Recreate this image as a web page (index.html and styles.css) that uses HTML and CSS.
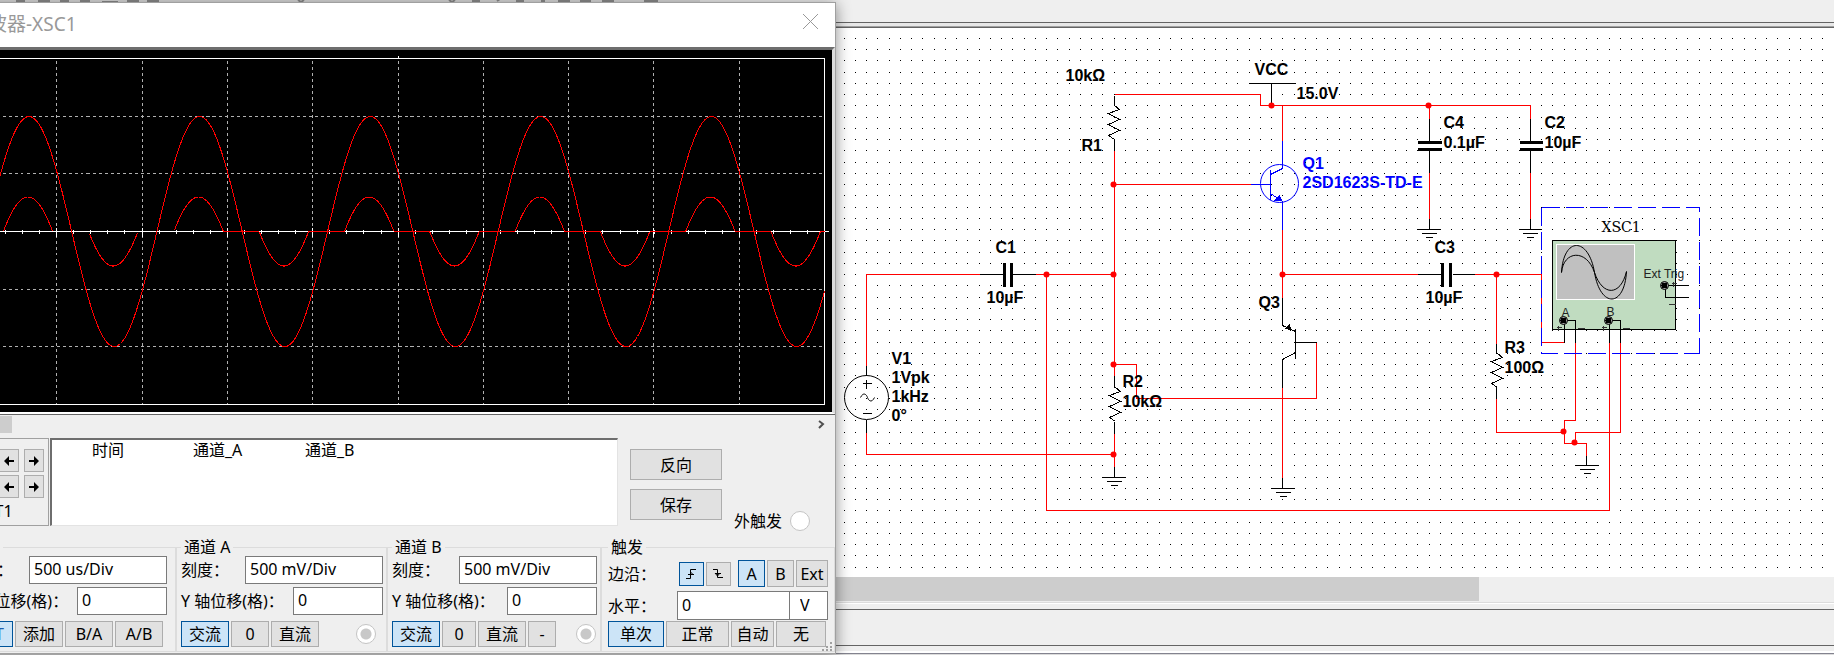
FILE: index.html
```html
<!DOCTYPE html>
<html lang="zh-CN">
	<head>
		<meta charset="UTF-8">
		<title>示波器-XSC1</title>
		<link rel="stylesheet" href="styles.css">
	</head>
	<body>
		<div class="toolbar">
			<svg class="tools" width="700" height="3">
				<path d="M16 1h9M38 1h12M60 1h9M80 1h10M102 2h16M127 1h12M147 1h12M298 0l3 2l3-2M449 0l3 2l3-2M472 1h8M497 1l3-2M516 1h8M541 1h4M558 1h12M580 1h11M602 1h12M644 1h14" />
			</svg>
		</div>
		<div class="canvas">
			<svg class="circuit" width="100%" height="549">
				<defs>
					<pattern id="dots" x="844" y="-1" width="45" height="45" patternUnits="userSpaceOnUse">
						<path class="dot" d="M0 0h1v1h-1zM11 0h1v1h-1zM22 0h1v1h-1zM33 0h1v1h-1zM0 11h1v1h-1zM11 11h1v1h-1zM22 11h1v1h-1zM33 11h1v1h-1zM0 22h1v1h-1zM11 22h1v1h-1zM22 22h1v1h-1zM33 22h1v1h-1zM0 33h1v1h-1zM11 33h1v1h-1zM22 33h1v1h-1zM33 33h1v1h-1z" />
					</pattern>
					<path id="zigzag" d="M0 0L5 4L-6 8L5 14L-6 19L5 25L-6 30L0 34" />
					<path id="ground" d="M-12 0h23M-8 4h15M-4 8h7" />
					<g id="terminal">
						<circle class="ring" r="4" />
						<circle r="3" />
					</g>
				</defs>
				<rect width="100%" height="549" fill="url(#dots)" />
				<g transform="translate(0.5 -27.5)">
					<!-- scope block -->
					<rect class="green" x="1552" y="240" width="123" height="89" />
					<rect class="screen" x="1556" y="244" width="78" height="55" />
					<path class="line smooth" d="M1561 272C1563 236 1588 236 1594 272S1624 307 1626 271M1561 272C1563 250 1586 248 1594 272S1620 296 1626 271" />

					<!-- wires -->
					<path class="wire" d="M866 365V274H979M1035 274H1114M1046 274V510H1609V342M866 432V454H1114M1114 94H1260V105H1530V118M1114 150V375M1114 184H1250M1282 105V140M1282 229V297M1429 105V118M1429 172V218M1530 172V218M1114 364H1136V398H1316V342M1114 433V466M1282 387V477M1282 274H1417M1474 274H1541V342H1564M1496 274V343M1496 398V432H1564M1575 342V420H1564V443H1586V455M1620 342V432H1575V443" />
					<!-- pins -->
					<path class="line" d="M979 274h24M1012 274h23M866 365V375M866 419V432M1114 95V105M1114 139V150M1249 83H1295M1271 83V105M1429 118V141M1429 150V172M1429 218V229M1530 118V141M1530 150V172M1530 218V229M1114 375V387M1114 421V433M1114 466V477M1417 274h24M1452 274h22M1496 343V353M1496 387V398M1282 477V488M1586 455V465M1282 297V325L1295 331M1295 328V358M1295 342H1316M1295 352L1282 359V387" />
					<path class="line" d="M1564 320V342M1564 320H1575V342M1609 320V342M1609 320H1620V342M1664 285H1688M1665 285V297H1688" />
					<path class="plate" d="M1004 262V286M1011 262V286M1442 262V286M1450 262V286M1417 142H1441M1417 149H1441M1519 142H1542M1519 149H1542" />
					<use class="line" href="#zigzag" x="1114" y="105" />
					<use class="line" href="#zigzag" x="1115" y="387" />
					<use class="line" href="#zigzag" x="1497" y="353" />
					<use class="line" href="#ground" x="1114" y="477" />
					<use class="line" href="#ground" x="1283" y="488" />
					<use class="line" href="#ground" x="1429" y="229" />
					<use class="line" href="#ground" x="1530" y="229" />
					<use class="line" href="#ground" x="1587" y="465" />

					<!-- V1 -->
					<circle class="line smooth" cx="866" cy="397" r="22" />
					<path class="line" d="M862 383h9M866 379v9M862 413h9" />
					<path class="line smooth" d="M860 397C863 391 866 394 867 397S871 403 874 397" />

					<!-- Q1, Q3 -->
					<circle class="blue smooth" cx="1279" cy="183" r="19" />
					<path class="blue" d="M1250 184H1270M1270 169V199M1282 140V168L1270 174M1270 193L1282 201V229" />
					<path class="blue-fill" d="M1279 194L1282 201L1274 200Z" />
					<path d="M1285 328L1289 323L1291 331Z" />

					<g class="joint">
						<circle cx="1046" cy="274" r="3" />
						<circle cx="1113" cy="274" r="3" />
						<circle cx="1113" cy="184" r="3" />
						<circle cx="1113" cy="364" r="3" />
						<circle cx="1113" cy="454" r="3" />
						<circle cx="1271" cy="105" r="3" />
						<circle cx="1282" cy="274" r="3" />
						<circle cx="1428" cy="105" r="3" />
						<circle cx="1496" cy="274" r="3" />
						<circle cx="1563" cy="431" r="3" />
						<circle cx="1574" cy="442" r="3" />
					</g>

					<path class="frame" d="M1541 207H1699V353M1541 207V353H1699" />
					<use href="#terminal" x="1563" y="320" />
					<use href="#terminal" x="1608" y="320" />
					<use href="#terminal" x="1664" y="285" />
					<path class="sign" d="M1556 327h5M1558 325v5M1601 327h5M1603 325v5M1671 283h5M1673 281v5M1577 328h7M1622 328h7M1668 304h7" />

					<g class="labels">
						<text x="1065" y="80">10kΩ</text>
						<text x="1081" y="150">R1</text>
						<text x="1254" y="74">VCC</text>
						<text x="1296" y="98">15.0V</text>
						<text x="1443" y="127">C4</text>
						<text x="1443" y="147">0.1µF</text>
						<text x="1544" y="127">C2</text>
						<text x="1544" y="147">10µF</text>
						<text x="995" y="252">C1</text>
						<text x="986" y="302">10µF</text>
						<text x="1434" y="252">C3</text>
						<text x="1425" y="302">10µF</text>
						<text x="1258" y="307">Q3</text>
						<text x="891" y="363">V1</text>
						<text x="891" y="382">1Vpk</text>
						<text x="891" y="401">1kHz</text>
						<text x="891" y="420">0°</text>
						<text x="1122" y="386">R2</text>
						<text x="1122" y="406">10kΩ</text>
						<text x="1504" y="352">R3</text>
						<text x="1504" y="372">100Ω</text>
						<text class="blue-fill" x="1302" y="168">Q1</text>
						<text class="blue-fill" x="1302" y="187">2SD1623S-TD-E</text>
					</g>
					<text class="scope-name" x="1601" y="231">XSC1</text>
					<g class="small">
						<text x="1643" y="277">Ext Trig</text>
						<text x="1561" y="316">A</text>
						<text x="1606" y="315">B</text>
					</g>
				</g>
			</svg>
		</div>
		<div class="hscroll"><div class="thumb"></div></div>
		<div class="status"></div>

		<div class="window">
			<div class="title">
				<span>示波器-XSC1</span>
				<button class="close" aria-label="关闭">
					<svg width="17" height="17"><path d="M1 1L16 16M16 1L1 16" /></svg>
				</button>
			</div>
			<div class="plot">
				<svg class="wave" viewBox="-40 50 872 362">
					<g transform="translate(0.5 0.5)">
						<path class="grid" id="grid" />
						<path class="axis" id="axis" />
						<path class="trace" id="traceA" />
						<path class="trace" id="traceB" />
					</g>
				</svg>
			</div>
			<div class="time-scroll">
				<div class="time-thumb"></div>
				<svg width="8" height="9"><path d="M1 1L5 4L1 8" /></svg>
			</div>
			<div class="readout">
				<div class="cursors">
					<div class="arrows">
						<button aria-label="T1 左"><svg width="10" height="10"><path d="M0 5L5 0V4H10V6H5V10Z" /></svg></button>
						<button aria-label="T1 右"><svg width="10" height="10"><path d="M10 5L5 0V4H0V6H5V10Z" /></svg></button>
						<button aria-label="T2 左"><svg width="10" height="10"><path d="M0 5L5 0V4H10V6H5V10Z" /></svg></button>
						<button aria-label="T2 右"><svg width="10" height="10"><path d="M10 5L5 0V4H0V6H5V10Z" /></svg></button>
					</div>
					<div class="delta">T2-T1</div>
				</div>
				<div class="values">
					<table>
						<tr><th class="c1">时间</th><th class="c2">通道_A</th><th>通道_B</th></tr>
					</table>
				</div>
				<div class="actions">
					<button>反向</button>
					<button>保存</button>
				</div>
				<label class="ext">外触发 <input type="radio" name="ext"></label>
			</div>
			<div class="groups">
				<fieldset class="timebase">
					<legend></legend>
					<div class="row"><label for="ts">标度：</label><input id="ts" class="wide" value="500 us/Div"></div>
					<div class="row"><label for="tx">X 轴位移(格)：</label><input id="tx" value="0"></div>
					<div class="keys">
						<button class="on w40">Y/T</button>
						<button class="w47">添加</button>
						<button class="w47">B/A</button>
						<button class="w47">A/B</button>
					</div>
				</fieldset>
				<fieldset>
					<legend>通道 A</legend>
					<div class="row"><label for="as">刻度：</label><input id="as" class="wide" value="500 mV/Div"></div>
					<div class="row"><label for="ay">Y 轴位移(格)：</label><input id="ay" value="0"></div>
					<div class="keys">
						<button class="on w47">交流</button>
						<button class="w38">0</button>
						<button class="w47">直流</button>
						<input type="radio" name="a" aria-label="通道 A" checked disabled>
					</div>
				</fieldset>
				<fieldset class="channel-b">
					<legend>通道 B</legend>
					<div class="row"><label for="bs">刻度：</label><input id="bs" class="wide" value="500 mV/Div"></div>
					<div class="row"><label for="by">Y 轴位移(格)：</label><input id="by" value="0"></div>
					<div class="keys">
						<button class="on w47">交流</button>
						<button class="w34">0</button>
						<button class="w47">直流</button>
						<button class="w28">-</button>
						<input type="radio" name="b" aria-label="通道 B" checked disabled>
					</div>
				</fieldset>
				<fieldset class="trigger">
					<legend>触发</legend>
					<div class="row edge">
						<span>边沿：</span>
						<button class="on push" aria-label="上升沿"><svg width="11" height="12"><path d="M0 10.500H4.500V1.500H10M2 6.500H8M4.500 4L7 6.500" /></svg></button>
						<button aria-label="下降沿"><svg width="11" height="12"><path d="M0 1.500H4.500V9.500H10M2 5.500H8M2 5L4.500 8L7 5" /></svg></button>
						<button class="on tall">A</button>
						<button class="tall">B</button>
						<button class="tall w32">Ext</button>
					</div>
					<div class="row level">
						<label for="lv">水平：</label>
						<input id="lv" class="push" value="0">
						<input class="unit" aria-label="单位" value="V">
					</div>
					<div class="keys">
						<button class="on w56">单次</button>
						<button class="w63">正常</button>
						<button class="w43">自动</button>
						<button class="w50">无</button>
					</div>
					<svg class="grip" width="12" height="9"><path d="M8 0h2v2h-2zM4 4h2v2h-2zM8 4h2v2h-2zM0 7h2v2h-2zM4 7h2v2h-2zM8 7h2v2h-2z" /></svg>
				</fieldset>
			</div>
		</div>
		<script src="script.js"></script>
	</body>
</html>
```

FILE: styles.css
```css
* {
	box-sizing: border-box;
}
body {
	margin: 0;
	height: 100vh;
	display: flex;
	flex-direction: column;
	overflow: hidden;
	background: #efefef;
	color: #000;
	font-family: "Noto Sans", "Noto Sans CJK SC", sans-serif;
	font-size: 16px;
	line-height: 20px;
}
.toolbar {
	height: 28px;
	flex: none;
	border-bottom: 1px solid #646464;
	background: linear-gradient(#efefef 22px, #646464 22px, #646464 23px, #e8e8e8 23px, #e8e8e8 26px, #a0a0a0 26px);
}
.tools {
	display: block;
	background: #dcdcdc;
}
.tools path {
	stroke: #8c8c8c;
	stroke-width: 2px;
	fill: none;
}
.canvas {
	flex: 1;
	min-height: 0;
	overflow: hidden;
	background: #fff;
}
.hscroll {
	height: 24px;
	flex: none;
}
.thumb {
	width: calc(100% - 355px);
	height: 24px;
	background: #cdcdcd;
}
.status {
	height: 54px;
	flex: none;
	background: linear-gradient(#efefef 1px, #dcdcdc 1px, #dcdcdc 2px, #fff 2px, #fff 3px, #efefef 3px, #efefef 8px, #646464 8px, #646464 9px, #efefef 9px, #efefef 44px, #646464 44px, #646464 45px, #efefef 45px, #efefef 50px, #fff 50px, #fff 52px, #83838f 52px, #83838f 53px, #dcdcdc 53px);
}

/* schematic */
.circuit {
	display: block;
	shape-rendering: crispEdges;
}
.smooth {
	shape-rendering: auto;
}
.wire {
	fill: none;
	stroke: #f00;
}
.line {
	fill: none;
	stroke: #000;
}
.plate {
	stroke: #000;
	stroke-width: 3px;
}
.blue {
	fill: none;
	stroke: #00f;
}
.blue-fill {
	fill: #00f;
}
.joint {
	fill: #f00;
	shape-rendering: auto;
}
.frame {
	fill: none;
	stroke: #00f;
	stroke-dasharray: 18 6;
}
.green {
	fill: #c0dcc0;
	stroke: #000;
}
.screen {
	fill: #c0c0c0;
	stroke: #fff;
}
.ring {
	fill: #a0a0a0;
	stroke: #000;
	shape-rendering: auto;
}
.sign {
	stroke: #333;
}
.labels {
	font-family: "Liberation Sans", sans-serif;
	font-size: 16px;
	font-weight: bold;
}
.scope-name {
	font-family: "DejaVu Serif", serif;
	font-size: 14px;
}
.small {
	font-family: "Liberation Sans", sans-serif;
	font-size: 12px;
	fill: #222;
}

/* oscilloscope window, runs off the left edge */
.window {
	position: absolute;
	top: 2px;
	left: -40px;
	width: 876px;
	background: #efefef;
	border: 1px solid #a0a0a0;
	border-left: 0;
	box-shadow: 0 2px 14px rgba(0, 0, 0, .45);
}
.title {
	height: 44px;
	display: flex;
	align-items: center;
	justify-content: space-between;
	padding: 0 16px 2px 9px;
	background: #fff;
	color: #999;
	font-size: 19px;
}
.close {
	border: 0;
	padding: 0;
	background: none;
	display: flex;
	margin-top: 4px;
}
.close path {
	stroke: #999;
}
.plot {
	border-top: 3px solid #6e6e6e;
	border-right: 3px solid #dcdcdc;
	border-bottom: 2px solid #fff;
	background: #000;
}
.wave {
	display: block;
	width: 100%;
	shape-rendering: crispEdges;
}
.grid {
	stroke: #b0b0b0;
	stroke-dasharray: 3 3;
}
.axis {
	fill: none;
	stroke: #fff;
}
.trace {
	fill: none;
	stroke: #f00;
}
.time-scroll {
	display: flex;
	align-items: center;
	justify-content: space-between;
	height: 20px;
	padding: 1px 9px 1px 0;
	border-top: 1px solid #646464;
}
.time-scroll path {
	fill: none;
	stroke: #505050;
	stroke-width: 2px;
}
.time-thumb {
	width: 52px;
	height: 17px;
	background: #cdcdcd;
}

button {
	height: 26px;
	padding: 0;
	border: 1px solid #adadad;
	background: #e1e1e1;
	color: #000;
	font: inherit;
	line-height: 22px;
}
.on {
	border-color: #00549a;
	background: #cce4f7;
}
input {
	width: 90px;
	height: 28px;
	padding: 0 4px 2px;
	border: 1px solid #7a7a7a;
	border-radius: 0;
	background: #fff;
	color: #000;
	font: inherit;
}
input[type=radio] {
	appearance: none;
	flex: none;
	width: 20px;
	height: 20px;
	margin: 0;
	padding: 0;
	border: 1px solid #c4c4c4;
	border-radius: 50%;
}
input[type=radio]:checked {
	background: radial-gradient(circle, #c8c8c8 5px, #fff 6px);
}

.readout {
	display: grid;
	grid-template-columns: 89px 569px 104px 1fr;
	height: 93px;
	margin-top: 4px;
}
.cursors {
	height: 88px;
	padding: 10px 4px 0 20px;
	border: 1px solid #a0a0a0;
}
.arrows {
	display: grid;
	grid-template-columns: 1fr 20px;
	gap: 3px 5px;
}
.arrows button {
	height: 23px;
	display: flex;
	align-items: center;
	justify-content: flex-end;
	padding-right: 4px;
}
.delta {
	margin-top: 3px;
	margin-left: -9px;
}
.values {
	height: 88px;
	margin-left: 1px;
	padding: 0 0 0 40px;
	border: 1px solid #e3e3e3;
	border-top: 2px solid #6e6e6e;
	border-left: 2px solid #6e6e6e;
	background: #fff;
}
table {
	border-collapse: collapse;
}
th {
	padding: 0;
	font-weight: normal;
	text-align: left;
}
.c1 {
	width: 101px;
}
.c2 {
	width: 112px;
}
.actions {
	display: flex;
	flex-direction: column;
	gap: 9px;
	padding: 11px 0 0 12px;
}
.actions button {
	height: 31px;
}
.ext {
	display: flex;
	align-items: center;
	gap: 8px;
	align-self: end;
	margin-left: 12px;
}

.groups {
	display: grid;
	grid-template-columns: 216px 211px 214px 1fr;
	margin-top: 7px;
	padding-bottom: 1px;
}
fieldset {
	min-width: 0;
	margin: 0;
	padding: 0 3px 4px 4px;
	border: 1px solid #dcdcdc;
}
.timebase {
	padding-right: 8px;
}
legend {
	height: 18px;
	padding: 0 3px;
	line-height: 18px;
}
.timebase legend {
	width: 38px;
}
.row {
	display: flex;
	align-items: center;
	justify-content: space-between;
	margin-bottom: 3px;
	white-space: nowrap;
}
.wide {
	width: 138px;
}
.keys {
	display: flex;
	gap: 2px;
	margin-top: 6px;
}
.keys input[type=radio] {
	margin: 3px 7px 0 auto;
}
.timebase .keys {
	padding-left: 8px;
}
.channel-b .keys input[type=radio] {
	margin-right: 1px;
}
.w28 {
	width: 28px;
}
.w34 {
	width: 34px;
}
.w38 {
	width: 38px;
}
.w40 {
	width: 40px;
	text-align: right;
	padding-right: 8px;
	color: #1f5fae;
}
.w43 {
	width: 43px;
}
.w47 {
	width: 48px;
}
.w50 {
	width: 50px;
}
.w56 {
	width: 56px;
}
.w63 {
	width: 63px;
}
.trigger {
	position: relative;
	padding: 0 6px 4px;
}
.trigger .row {
	justify-content: flex-start;
	margin: 0;
}
.trigger .keys {
	margin-top: 1px;
}
.edge {
	height: 35px;
	gap: 2px;
}
.edge button {
	width: 25px;
	height: 24px;
}
.edge .tall {
	width: 27px;
	height: 27px;
}
.edge .on.tall {
	margin-left: 5px;
}
.edge .w32 {
	width: 32px;
}
.edge path {
	fill: none;
	stroke: #000;
}
.push {
	margin-left: auto;
}
.level input {
	width: 113px;
	height: 29px;
}
.level .unit {
	width: 39px;
	margin-left: -1px;
	padding-left: 10px;
}
.grip {
	position: absolute;
	right: 0;
	bottom: 0;
	fill: #a0a0a0;
}
```

FILE: script.js
```js
var cols = [56, 142, 227, 312, 398, 483, 568, 653, 739];
var rows = [116, 173, 289, 346];
var grid = "";
var axis = "M-40 58H824V404H-40M-40 231H828M398 55V58";
var period = 170.6;
var i, x;

function getId(e){
	return document.getElementById(e);
}

for(i = 0; i < cols.length; i++){
	grid += "M" + cols[i] + " 60V404";
	axis += "M" + cols[i] + " 227V236";
}
for(i = 0; i < rows.length; i++){
	grid += "M-40 " + rows[i] + "H824";
}
for(x = 5; x < 824; x += 17.07){
	axis += "M" + Math.round(x) + " 229V233";
}

// input sine
function sine(x){
	return Math.cos(2 * Math.PI * (x - 28.5) / period);
}
var a = "";
var b = "";
var pen = false;
for(x = -40; x <= 824; x++){
	var s = sine(x);
	a += (a ? "L" : "M") + x + " " + (231 - 115 * s).toFixed(1);

	// output with the dead zone around zero
	var c = sine(x + 1);
	var v = Math.max(Math.abs(c) - 0.614, 0) / 0.386 * 34.5;
	if(v == 0 && x < 223){
		pen = false;
		continue;
	}
	b += (pen ? "L" : "M") + x + " " + (c > 0 ? 231 - v : 231 + v).toFixed(1);
	pen = true;
}

getId("grid").setAttribute("d", grid);
getId("axis").setAttribute("d", axis);
getId("traceA").setAttribute("d", a);
getId("traceB").setAttribute("d", b);
```
